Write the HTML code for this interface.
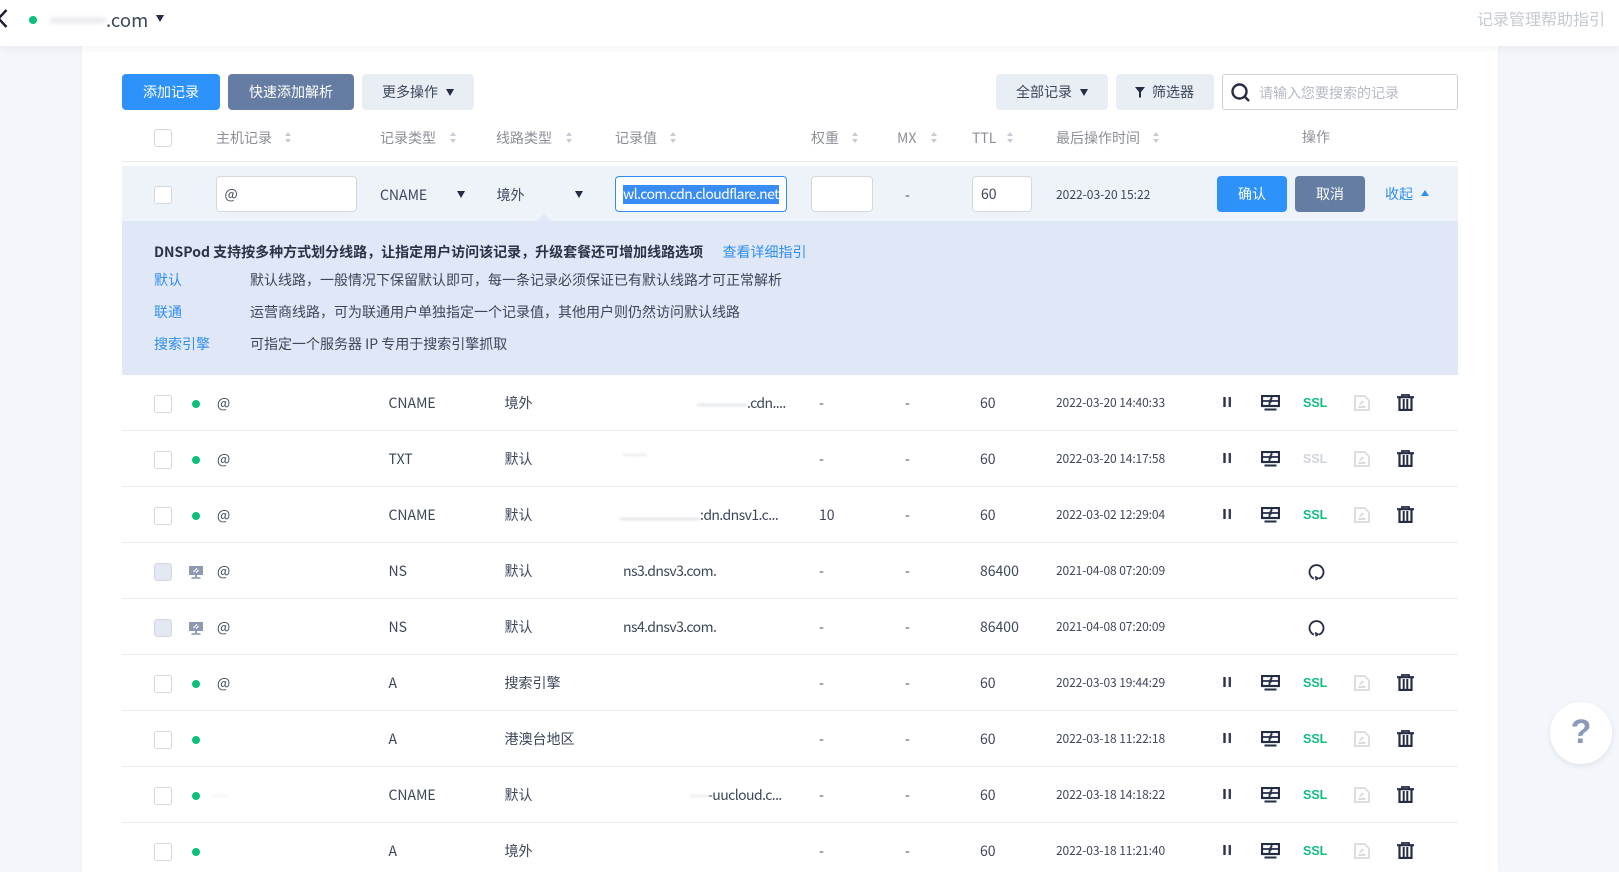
<!DOCTYPE html>
<html lang="zh">
<head>
<meta charset="utf-8">
<title>记录管理</title>
<style>
*{box-sizing:border-box;margin:0;padding:0}
html{width:1619px;height:872px;overflow:hidden}
body{position:relative;width:1619px;height:872px;overflow:hidden;background:#f3f6fa;font-family:"Noto Sans CJK SC","Liberation Sans",sans-serif;font-size:14px;color:#3c4759}
.a{position:absolute;white-space:nowrap}
#hd{position:absolute;left:0;top:0;width:1619px;height:46px;background:#fff;box-shadow:0 2px 8px rgba(60,80,120,.07);z-index:5}
#card{position:absolute;left:82px;top:0;width:1416px;height:872px;background:#fff;box-shadow:0 0 3px rgba(60,80,120,.05)}
.btn{position:absolute;top:74px;height:36px;border-radius:4px;line-height:37px;text-align:center;font-size:14px}
.pri{background:#2e92fb;color:#fff}
.sec{background:#667da3;color:#fff}
.lt{background:#e9eef5;color:#3c4759}
.tri{position:absolute;width:0;height:0;border-left:4px solid transparent;border-right:4px solid transparent;border-top:7px solid #252c45}
.th{position:absolute;top:128px;line-height:20px;font-size:14px;color:#8b8f96;white-space:nowrap}
.sort{position:absolute;top:132px;width:6px;height:11px}
.sort:before,.sort:after{content:"";position:absolute;left:0;width:0;height:0;border-left:3px solid transparent;border-right:3px solid transparent}
.sort:before{top:0;border-bottom:4px solid #c5ccd8}
.sort:after{bottom:0;border-top:4px solid #c5ccd8}
.cb{position:absolute;width:18px;height:18px;border:1px solid #d3d7dd;border-radius:3px;background:#fff}
.inp{position:absolute;top:176px;height:36px;background:#fff;border:1px solid #d3d7de;border-radius:4px;line-height:35px;padding-left:8px;font-size:14px;color:#3c4759;overflow:hidden;white-space:nowrap}
.r{position:absolute;left:122px;width:1336px;height:56px;border-bottom:1px solid #e9ebef;line-height:56px;background:#fff}
.r>span{position:absolute;top:0;white-space:nowrap;line-height:56px}
.r .cb{left:32px;top:20px}
.r .dis{background:#e3e8f3}
.dot{position:absolute;left:70px;top:25px;width:8px;height:8px;border-radius:50%;background:#0cbf7b}
.t1{left:95px}.t2{left:266.5px}.t3{left:382.5px}
.d{left:934px;font-size:12px;letter-spacing:-.1px;color:#3c4759}
.ttl{left:858px}
.v{letter-spacing:-.57px}
.ic{position:absolute;display:block}
.ssl{position:absolute;left:1181px;top:0;line-height:56px;font-size:12.5px;font-weight:700;color:#12bd7f;font-family:"Liberation Sans",sans-serif}
.ssl.off{color:#d0d4de}
.sm{position:absolute;background:#d8dbe0;filter:blur(1.2px);height:2px}
.p{position:absolute;white-space:nowrap;line-height:20px;font-size:14px}
.lk{color:#2e8fee}
</style>
</head>
<body>
<svg width="0" height="0" style="position:absolute">
<symbol id="pause" viewBox="0 0 9 10"><rect x="0.300" y="0" width="2.400" height="10" fill="#2a3048"/><rect x="5.600" y="0" width="2.400" height="10" fill="#3a4058"/></symbol>
<symbol id="mon" viewBox="0 0 19 16"><rect x="1" y="1" width="17" height="10" fill="none" stroke="#252c45" stroke-width="2.200"/><path d="M1 6H8.500L10.500 3.500V1M8.500 11V8L10.500 6H18" fill="none" stroke="#252c45" stroke-width="1.800"/><rect x="3.500" y="13.500" width="12" height="2" fill="#252c45"/></symbol>
<symbol id="doc" viewBox="0 0 16 16"><path d="M1 1H10.500L15 5.500V15H1Z" fill="none" stroke="#dcdfe2" stroke-width="2"/><path d="M4.500 12H11.500" stroke="#d6d9dd" stroke-width="1.800"/><path d="M5.500 9.500L9.500 6" stroke="#d6d9dd" stroke-width="1.800"/></symbol>
<symbol id="trash" viewBox="0 0 17 17"><path d="M0 3.200H17" stroke="#252c45" stroke-width="2.200"/><path d="M5 3V1H12V3" fill="none" stroke="#252c45" stroke-width="1.800"/><path d="M2.500 4V16H14.500V4" fill="none" stroke="#252c45" stroke-width="2.200"/><path d="M6.700 5V15M10.300 5V15" stroke="#252c45" stroke-width="2"/></symbol>
<symbol id="ref" viewBox="0 0 17 17"><path d="M6 14.600A7 7 0 1 1 11 14.600" fill="none" stroke="#252c45" stroke-width="1.800"/><path d="M7 11.800L11.600 14.300L7.600 16.800Z" fill="#252c45"/></symbol>
<symbol id="srv" viewBox="0 0 14 13"><rect x="0" y="0" width="14" height="9" fill="#8e9ab5"/><path d="M4.500 6L8 2.200M7 6.600L9.500 4" stroke="#fff" stroke-width="1.200"/><rect x="6" y="9" width="2" height="2.200" fill="#8e9ab5"/><rect x="2.500" y="11.200" width="9" height="1.600" fill="#8e9ab5"/></symbol>
</svg>

<div id="card"></div>

<div id="hd">
  <svg class="ic" style="left:-3px;top:9px" width="12" height="19" viewBox="0 0 12 19"><path d="M9.500 1L1.500 9.500L9.500 18" fill="none" stroke="#1c2233" stroke-width="2.500"/></svg>
  <div class="a" style="left:29px;top:16px;width:8px;height:8px;border-radius:50%;background:#0cbf7b"></div>
  <div class="a" style="left:50px;top:18px;width:56px;height:5px;background:#e4e6ea;filter:blur(2.5px)"></div>
  <div class="a" style="left:106px;top:6px;line-height:28px;font-size:18.500px;color:#3c4759">.com</div>
  <div class="tri" style="left:156px;top:15px"></div>
  <div class="a" style="left:1477px;top:6px;line-height:24px;font-size:16px;color:#c4cad2">记录管理帮助指引</div>
</div>

<div class="btn pri" style="left:122px;width:98px">添加记录</div>
<div class="btn sec" style="left:228px;width:126px">快速添加解析</div>
<div class="btn lt" style="left:362px;width:112px;text-align:left;padding-left:20px">更多操作</div>
<div class="tri" style="left:446px;top:89px"></div>
<div class="btn lt" style="left:996px;width:112px;text-align:left;padding-left:20px">全部记录</div>
<div class="tri" style="left:1080px;top:89px"></div>
<div class="btn lt" style="left:1116px;width:98px;text-align:left;padding-left:36px">筛选器</div>
<svg class="ic" style="left:1135px;top:87px" width="10" height="11" viewBox="0 0 10 11"><path d="M0 0H10L6 5V10.500H4V5Z" fill="#252c45"/></svg>
<div class="a" style="left:1222px;top:74px;width:236px;height:36px;border:1px solid #ccd0d6;border-radius:3px;background:#fff"></div>
<svg class="ic" style="left:1231px;top:83px" width="19" height="19" viewBox="0 0 19 19"><circle cx="8.500" cy="8.500" r="7" fill="none" stroke="#252c45" stroke-width="2.400"/><path d="M13 13L18 18" stroke="#252c45" stroke-width="2.400"/></svg>
<div class="a" style="left:1259px;top:83px;line-height:20px;font-size:14px;color:#b4bac4">请输入您要搜索的记录</div>

<div class="cb" style="left:154px;top:129px"></div>
<div class="th" style="left:216px">主机记录</div><div class="sort" style="left:285px"></div>
<div class="th" style="left:380px">记录类型</div><div class="sort" style="left:450px"></div>
<div class="th" style="left:496px">线路类型</div><div class="sort" style="left:566px"></div>
<div class="th" style="left:615px">记录值</div><div class="sort" style="left:670px"></div>
<div class="th" style="left:811px">权重</div><div class="sort" style="left:852px"></div>
<div class="th" style="left:897px">MX</div><div class="sort" style="left:931px"></div>
<div class="th" style="left:972px">TTL</div><div class="sort" style="left:1007px"></div>
<div class="th" style="left:1056px">最后操作时间</div><div class="sort" style="left:1153px"></div>
<div class="th" style="left:1302px;top:127px">操作</div>
<div class="a" style="left:122px;top:161px;width:1336px;height:1px;background:#e6e8ec"></div>

<div class="a" style="left:122px;top:166px;width:1336px;height:55px;background:#eef3fa"></div>
<div class="cb" style="left:154px;top:186px"></div>
<div class="inp" style="left:216px;width:141px;padding-left:7.500px">@</div>
<div class="p" style="left:380px;top:185px">CNAME</div>
<div class="tri" style="left:457px;top:191px"></div>
<div class="p" style="left:496.500px;top:185px">境外</div>
<div class="tri" style="left:575px;top:191px"></div>
<div class="inp" style="left:615px;width:172px;border-color:#2e8fee;padding-left:7px"><span style="background:#3a8cf5;color:#fff;display:inline-block;line-height:19px;height:19px;width:156px;overflow:hidden;vertical-align:middle;margin-top:-2px;letter-spacing:-.57px">wl.com.cdn.cloudflare.net</span></div>
<div class="inp" style="left:811px;width:62px"></div>
<div class="p" style="left:905px;top:185px">-</div>
<div class="inp" style="left:972px;width:60px">60</div>
<div class="p" style="left:1056px;top:185px;font-size:12px">2022-03-20 15:22</div>
<div class="btn pri" style="left:1217px;top:176px;width:70px">确认</div>
<div class="btn sec" style="left:1295px;top:176px;width:70px">取消</div>
<div class="p lk" style="left:1385px;top:184px">收起</div>
<div class="a" style="left:1421px;top:190px;width:0;height:0;border-left:4px solid transparent;border-right:4px solid transparent;border-bottom:6px solid #2e8fee"></div>

<div class="a" style="left:122px;top:221px;width:1336px;height:154px;background:#e0e7f6"></div>
<div class="a" style="left:537px;top:214px;width:0;height:0;border-left:7px solid transparent;border-right:7px solid transparent;border-bottom:7px solid #e0e7f6"></div>
<div class="p" style="left:154px;top:242px;font-weight:700;color:#2a3245">DNSPod 支持按多种方式划分线路，让指定用户访问该记录，升级套餐还可增加线路选项</div>
<div class="p lk" style="left:722.500px;top:242px">查看详细指引</div>
<div class="p lk" style="left:154px;top:270px">默认</div>
<div class="p" style="left:250px;top:270px">默认线路，一般情况下保留默认即可，每一条记录必须保证已有默认线路才可正常解析</div>
<div class="p lk" style="left:154px;top:302px">联通</div>
<div class="p" style="left:250px;top:302px">运营商线路，可为联通用户单独指定一个记录值，其他用户则仍然访问默认线路</div>
<div class="p lk" style="left:154px;top:334px">搜索引擎</div>
<div class="p" style="left:250px;top:334px">可指定一个服务器 IP 专用于搜索引擎抓取</div>

<!-- row 1 -->
<div class="r" style="top:375px"><i class="cb"></i><i class="dot"></i><span class="t1">@</span><span class="t2">CNAME</span><span class="t3">境外</span>
<i class="sm" style="left:575px;top:29px;width:50px"></i><span class="v" style="left:625px">.cdn....</span>
<span style="left:697px">-</span><span style="left:783px">-</span><span class="ttl">60</span><span class="d">2022-03-20 14:40:33</span>
<svg class="ic" style="left:1101px;top:22px" width="9" height="10"><use href="#pause"/></svg>
<svg class="ic" style="left:1139px;top:20px" width="19" height="16"><use href="#mon"/></svg><b class="ssl">SSL</b>
<svg class="ic" style="left:1232px;top:20px" width="16" height="16"><use href="#doc"/></svg>
<svg class="ic" style="left:1275px;top:19px" width="17" height="17"><use href="#trash"/></svg></div>
<!-- row 2 -->
<div class="r" style="top:431px"><i class="cb"></i><i class="dot"></i><span class="t1">@</span><span class="t2">TXT</span><span class="t3">默认</span>
<i class="sm" style="left:501px;top:23px;width:24px;background:#e4e6ea"></i>
<span style="left:697px">-</span><span style="left:783px">-</span><span class="ttl">60</span><span class="d">2022-03-20 14:17:58</span>
<svg class="ic" style="left:1101px;top:22px" width="9" height="10"><use href="#pause"/></svg>
<svg class="ic" style="left:1139px;top:20px" width="19" height="16"><use href="#mon"/></svg><b class="ssl off">SSL</b>
<svg class="ic" style="left:1232px;top:20px" width="16" height="16"><use href="#doc"/></svg>
<svg class="ic" style="left:1275px;top:19px" width="17" height="17"><use href="#trash"/></svg></div>
<!-- row 3 -->
<div class="r" style="top:487px"><i class="cb"></i><i class="dot"></i><span class="t1">@</span><span class="t2">CNAME</span><span class="t3">默认</span>
<i class="sm" style="left:498px;top:31px;width:80px"></i><span class="v" style="left:578px">:dn.dnsv1.c...</span>
<span style="left:697px">10</span><span style="left:783px">-</span><span class="ttl">60</span><span class="d">2022-03-02 12:29:04</span>
<svg class="ic" style="left:1101px;top:22px" width="9" height="10"><use href="#pause"/></svg>
<svg class="ic" style="left:1139px;top:20px" width="19" height="16"><use href="#mon"/></svg><b class="ssl">SSL</b>
<svg class="ic" style="left:1232px;top:20px" width="16" height="16"><use href="#doc"/></svg>
<svg class="ic" style="left:1275px;top:19px" width="17" height="17"><use href="#trash"/></svg></div>
<!-- row 4 -->
<div class="r" style="top:543px"><i class="cb dis"></i><svg class="ic" style="left:67px;top:23px" width="14" height="13"><use href="#srv"/></svg><span class="t1">@</span><span class="t2">NS</span><span class="t3">默认</span>
<span class="v" style="left:501px">ns3.dnsv3.com.</span>
<span style="left:697px">-</span><span style="left:783px">-</span><span class="ttl">86400</span><span class="d">2021-04-08 07:20:09</span>
<svg class="ic" style="left:1186px;top:21px" width="17" height="17"><use href="#ref"/></svg></div>
<!-- row 5 -->
<div class="r" style="top:599px"><i class="cb dis"></i><svg class="ic" style="left:67px;top:23px" width="14" height="13"><use href="#srv"/></svg><span class="t1">@</span><span class="t2">NS</span><span class="t3">默认</span>
<span class="v" style="left:501px">ns4.dnsv3.com.</span>
<span style="left:697px">-</span><span style="left:783px">-</span><span class="ttl">86400</span><span class="d">2021-04-08 07:20:09</span>
<svg class="ic" style="left:1186px;top:21px" width="17" height="17"><use href="#ref"/></svg></div>
<!-- row 6 -->
<div class="r" style="top:655px"><i class="cb"></i><i class="dot"></i><span class="t1">@</span><span class="t2">A</span><span class="t3">搜索引擎</span>
<span style="left:697px">-</span><span style="left:783px">-</span><span class="ttl">60</span><span class="d">2022-03-03 19:44:29</span>
<svg class="ic" style="left:1101px;top:22px" width="9" height="10"><use href="#pause"/></svg>
<svg class="ic" style="left:1139px;top:20px" width="19" height="16"><use href="#mon"/></svg><b class="ssl">SSL</b>
<svg class="ic" style="left:1232px;top:20px" width="16" height="16"><use href="#doc"/></svg>
<svg class="ic" style="left:1275px;top:19px" width="17" height="17"><use href="#trash"/></svg></div>
<!-- row 7 -->
<div class="r" style="top:711px"><i class="cb"></i><i class="dot"></i><span class="t2">A</span><span class="t3">港澳台地区</span>
<span style="left:697px">-</span><span style="left:783px">-</span><span class="ttl">60</span><span class="d">2022-03-18 11:22:18</span>
<svg class="ic" style="left:1101px;top:22px" width="9" height="10"><use href="#pause"/></svg>
<svg class="ic" style="left:1139px;top:20px" width="19" height="16"><use href="#mon"/></svg><b class="ssl">SSL</b>
<svg class="ic" style="left:1232px;top:20px" width="16" height="16"><use href="#doc"/></svg>
<svg class="ic" style="left:1275px;top:19px" width="17" height="17"><use href="#trash"/></svg></div>
<!-- row 8 -->
<div class="r" style="top:767px"><i class="cb"></i><i class="dot"></i><i class="sm" style="left:90px;top:28px;width:16px;height:1px;background:#e4e6ea"></i><span class="t2">CNAME</span><span class="t3">默认</span>
<i class="sm" style="left:568px;top:28px;width:18px;background:#e4e6ea"></i><span class="v" style="left:586px">-uucloud.c...</span>
<span style="left:697px">-</span><span style="left:783px">-</span><span class="ttl">60</span><span class="d">2022-03-18 14:18:22</span>
<svg class="ic" style="left:1101px;top:22px" width="9" height="10"><use href="#pause"/></svg>
<svg class="ic" style="left:1139px;top:20px" width="19" height="16"><use href="#mon"/></svg><b class="ssl">SSL</b>
<svg class="ic" style="left:1232px;top:20px" width="16" height="16"><use href="#doc"/></svg>
<svg class="ic" style="left:1275px;top:19px" width="17" height="17"><use href="#trash"/></svg></div>
<!-- row 9 -->
<div class="r" style="top:823px"><i class="cb"></i><i class="dot"></i><span class="t2">A</span><span class="t3">境外</span>
<span style="left:697px">-</span><span style="left:783px">-</span><span class="ttl">60</span><span class="d">2022-03-18 11:21:40</span>
<svg class="ic" style="left:1101px;top:22px" width="9" height="10"><use href="#pause"/></svg>
<svg class="ic" style="left:1139px;top:20px" width="19" height="16"><use href="#mon"/></svg><b class="ssl">SSL</b>
<svg class="ic" style="left:1232px;top:20px" width="16" height="16"><use href="#doc"/></svg>
<svg class="ic" style="left:1275px;top:19px" width="17" height="17"><use href="#trash"/></svg></div>

<div class="a" style="left:1550px;top:702px;width:62px;height:62px;border-radius:50%;background:#fff;box-shadow:0 2px 6px rgba(60,80,120,.1);text-align:center;line-height:60px;font-size:34px;font-weight:700;color:#8a9ab8;font-family:'Liberation Sans',sans-serif">?</div>
</body>
</html>
